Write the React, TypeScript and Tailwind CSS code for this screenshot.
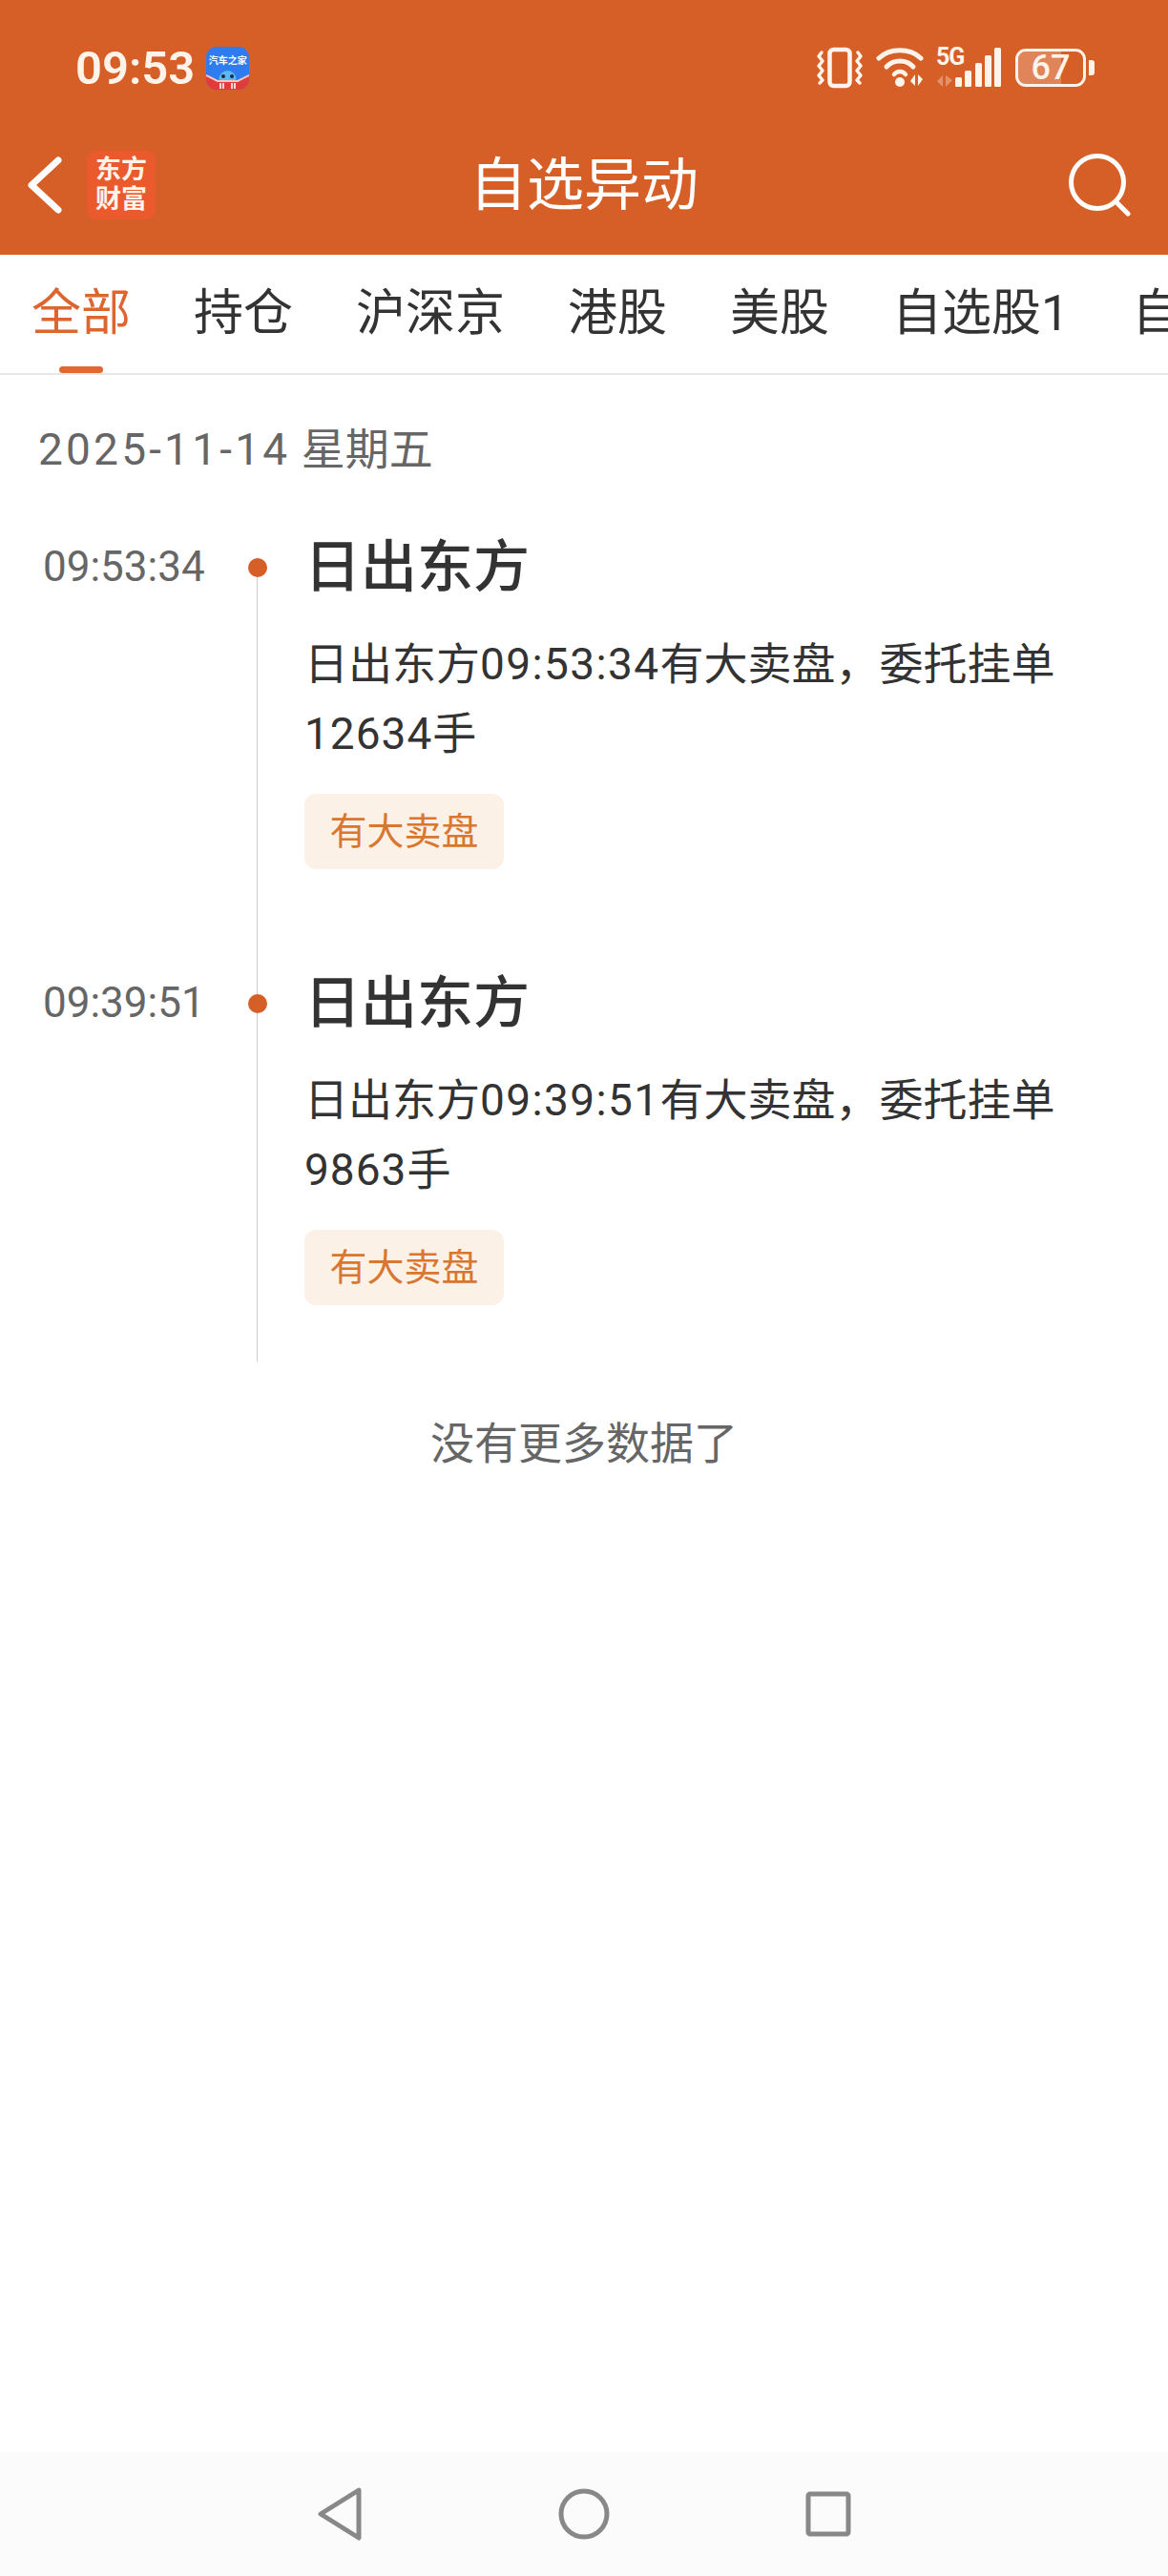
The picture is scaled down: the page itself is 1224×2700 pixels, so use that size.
const font = "font-['Roboto','Noto_Sans_CJK_SC',sans-serif]";

function Vibrate() {
  return (
    <svg width="50" height="44" viewBox="0 0 50 44" fill="none" stroke="#FFF3EA" strokeLinecap="round" strokeLinejoin="round">
      <rect x="14.5" y="3" width="21" height="38" rx="4" strokeWidth="4.5" />
      <path d="M6 6 L3 10 L7 15 L3 20 L7 25 L3 30 L7 35 L4 38" strokeWidth="3.5" />
      <path d="M44 6 L47 10 L43 15 L47 20 L43 25 L47 30 L43 35 L46 38" strokeWidth="3.5" />
    </svg>
  );
}

function Wifi() {
  return (
    <svg width="54" height="44" viewBox="0 0 54 44" fill="none" stroke="#FFF3EA" strokeLinecap="round">
      <path d="M3 12 C14 1 36 1 47 12" strokeWidth="5" />
      <path d="M11 21 C18 13 32 13 39 21" strokeWidth="5" />
      <path d="M19 29 C22 25 28 25 31 29" strokeWidth="4.5" />
      <circle cx="25" cy="37" r="5" fill="#FFF3EA" stroke="none" />
      <path d="M41 29 L41 41 L36 36 Z M44 29 L44 41 L49 34 Z" fill="#FFF3EA" stroke="none" />
    </svg>
  );
}

function Signal() {
  return (
    <svg width="70" height="42" viewBox="0 0 70 42" fill="#FFF3EA">
      <path d="M7 29 L7 41 L1 35 Z M10 29 L10 41 L17 34 Z" opacity="0.35" />
      <rect x="20" y="31" width="7" height="10" rx="1.5" />
      <rect x="30" y="24" width="7" height="17" rx="1.5" />
      <rect x="41" y="16" width="7" height="25" rx="1.5" />
      <rect x="51" y="8" width="7" height="33" rx="1.5" />
      <rect x="61" y="0" width="7" height="41" rx="1.5" />
    </svg>
  );
}

function AppIcon() {
  return (
    <div className="relative w-[45px] h-[45px] rounded-[11px] overflow-hidden bg-[#2F7CF0] flex flex-col items-center">
      <span className={`${font} text-[10px] leading-[12px] mt-[9px] font-bold text-white whitespace-nowrap`}>汽车之家</span>
      <svg className="absolute left-0 bottom-0" width="45" height="27" viewBox="0 0 45 27">
        <circle cx="22.5" cy="16" r="9" fill="#5CB8F0" />
        <path d="M0 12 L12 18 L33 18 L45 12 L45 27 L0 27 Z" fill="#E23B3B" />
        <path d="M0 12 L12 18 L33 18 L45 12" fill="none" stroke="#F6C9C0" strokeWidth="2" />
        <circle cx="18" cy="13" r="2" fill="#1d2a44" />
        <circle cx="27" cy="13" r="2" fill="#1d2a44" />
        <path d="M15 20 V26 M18 20 V26 M27 20 V26 M30 20 V26" stroke="#fff" strokeWidth="1.6" />
      </svg>
    </div>
  );
}

function Tag() {
  return (
    <div className="inline-flex w-[209px] h-[79px] pt-[2px] items-center justify-center rounded-[12px] bg-[#FCF1E7] text-[39px] text-[#D9762F]">
      有大卖盘
    </div>
  );
}

function Item({ time, amount, unit, last }: { time: string; amount: string; unit: string; last?: boolean }) {
  return (
    <div className={`flex ${last ? "h-[431px]" : "h-[457px]"}`}>
      <div className="w-[224px] pl-[45px] pt-[30px] text-[44px] leading-[50px] text-[#666666]">{time}</div>
      <div className="relative w-[95px] shrink-0">
        <div className={`absolute left-[45px] bottom-0 w-px bg-[#CCCCCC] ${last ? "top-0" : "top-[56px]"}`} />
        <div className="absolute left-[36px] top-[46px] w-[20px] h-[20px] rounded-full bg-[#D65F28]" />
      </div>
      <div className="flex-1 pr-[90px]">
        <div className="text-[59px] leading-[70px] mt-[21px] font-medium text-[#333333]">日出东方</div>
        <div className="text-[46px] leading-[73px] mt-[30px] text-[#333333]">
          <div>
            日出东方<span className="tracking-[1.4px]">{time}</span>有大卖盘，委托挂单
          </div>
          <div>
            <span className="tracking-[1px]">{amount}</span>
            {unit}
          </div>
        </div>
        <div className="mt-[26px]">
          <Tag />
        </div>
      </div>
    </div>
  );
}

export default function App() {
  const tabs = ["持仓", "沪深京", "港股", "美股", "自选股1", "自"];
  return (
    <div className={`${font} relative w-[1224px] h-[2700px] bg-white flex flex-col overflow-hidden`}>
      <header className="h-[267px] bg-[#D65F28] shrink-0 flex flex-col text-white">
        <div className="h-[130px] flex items-center justify-between pl-[79px] pr-[77px] pt-[12px]">
          <div className="flex items-center gap-[12px]">
            <span className="text-[49px] leading-none font-semibold text-[#FFF3EA]">09:53</span>
            <AppIcon />
          </div>
          <div className="flex items-center">
            <Vibrate />
            <div className="ml-[13px]"><Wifi /></div>
            <div className="relative ml-[9px] w-[70px] h-[42px]">
              <Signal />
              <span className="absolute left-0 top-[-3px] text-[25px] leading-[26px] font-bold text-[#FFF3EA] tracking-[-1px]">5G</span>
            </div>
            <div className="ml-[13px] relative w-[74px] h-[40px] rounded-[11px] border-[3px] border-[#FFF3EA] flex items-center justify-center overflow-hidden">
              <div className="absolute left-0 top-0 bottom-0 w-[66%] bg-[#FFF3EA]/25" />
              <span className="relative text-[36px] leading-none font-medium text-[#FFF3EA]">67</span>
            </div>
            <div className="ml-[3px] w-[6px] h-[16px] rounded-r-[3px] bg-[#FFF3EA]" />
          </div>
        </div>
        <div className="relative flex-1 flex items-center justify-center">
          <svg className="absolute left-[29px] top-[34px]" width="36" height="60" viewBox="0 0 36 60" fill="none" stroke="#FFF" strokeWidth="7" strokeLinecap="round" strokeLinejoin="round">
            <path d="M32 4 L4 30 L32 56" />
          </svg>
          <div className="absolute left-[91px] top-[28px] w-[72px] h-[72px] rounded-[10px] bg-[#EA5A2C] flex flex-col items-center justify-center text-[27px] leading-[31px] font-bold text-[#FFF3EA]">
            <span>东方</span>
            <span>财富</span>
          </div>
          <span className="text-[60px] leading-none mb-[8px]">自选异动</span>
          <svg className="absolute left-[1120px] top-[31px]" width="68" height="66" viewBox="0 0 68 66" fill="none" stroke="#FFF" strokeLinecap="round">
            <circle cx="30" cy="30" r="27.5" strokeWidth="5" />
            <path d="M49 50 L62 63" strokeWidth="5" />
          </svg>
        </div>
      </header>

      <nav className="relative h-[126px] shrink-0 border-b-2 border-[#E8E8E8] flex items-center pl-[33px] gap-[66px] overflow-hidden whitespace-nowrap text-[52px] text-[#333333]">
        <span className="text-[#DD652F]">全部</span>
        {tabs.map((t) => (
          <span key={t}>{t}</span>
        ))}
        <div className="absolute left-[62px] bottom-0 w-[46px] h-[7px] rounded-full bg-[#E4672F]" />
      </nav>

      <main className="flex-1 flex flex-col">
        <div className="pl-[40px] mt-[48px] text-[46px] leading-[60px] text-[#666666]">
          <span className="tracking-[3.2px]">2025-11-14</span> 星期五
        </div>
        <div className="mt-[38px]">
          <Item time="09:53:34" amount="12634" unit="手" />
          <Item time="09:39:51" amount="9863" unit="手" last />
        </div>
        <div className="mt-[56px] text-center text-[46px] leading-[60px] text-[#666666]">没有更多数据了</div>
      </main>

      <footer className="h-[130px] shrink-0 bg-[#FBFBFB] flex items-center justify-center gap-[205px]">
        <svg width="48" height="56" viewBox="0 0 48 56" fill="none" stroke="#888888" strokeWidth="5" strokeLinejoin="round">
          <path d="M44 3 L4 28 L44 53 Z" />
        </svg>
        <svg width="54" height="54" viewBox="0 0 54 54" fill="none" stroke="#888888" strokeWidth="5">
          <circle cx="27" cy="27" r="24" />
        </svg>
        <svg width="48" height="48" viewBox="0 0 48 48" fill="none" stroke="#888888" strokeWidth="5" strokeLinejoin="round">
          <rect x="3" y="3" width="42" height="42" rx="2" />
        </svg>
      </footer>
    </div>
  );
}
